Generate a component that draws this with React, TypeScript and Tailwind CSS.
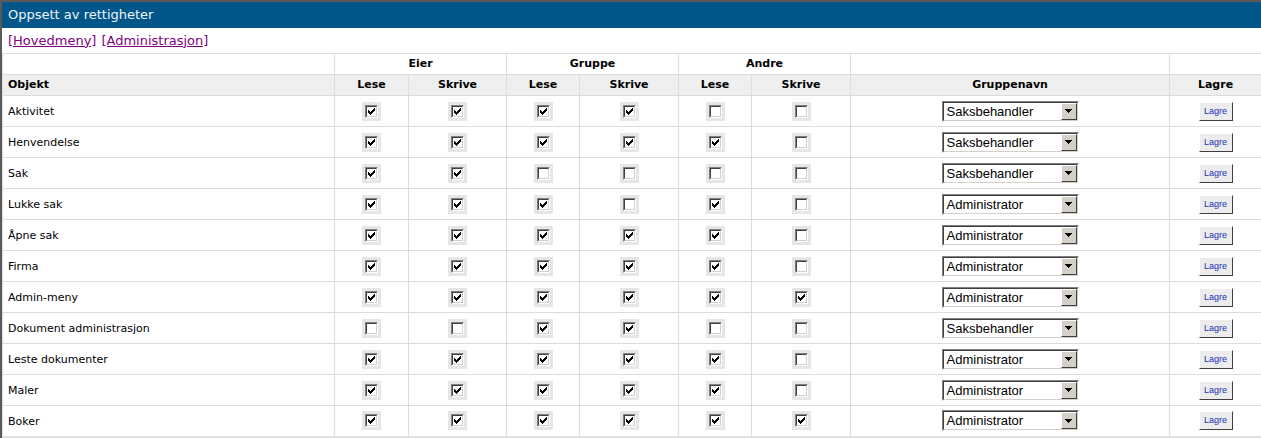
import React from 'react';

type Row = {
    name: string;
    perms: boolean[];
    group: string;
};

const rows: Row[] = [
    { name: 'Aktivitet', perms: [true, true, true, true, false, false], group: 'Saksbehandler' },
    { name: 'Henvendelse', perms: [true, true, true, true, true, false], group: 'Saksbehandler' },
    { name: 'Sak', perms: [true, true, false, false, false, false], group: 'Saksbehandler' },
    { name: 'Lukke sak', perms: [true, true, true, false, true, false], group: 'Administrator' },
    { name: 'Åpne sak', perms: [true, true, true, true, true, false], group: 'Administrator' },
    { name: 'Firma', perms: [true, true, true, true, true, false], group: 'Administrator' },
    { name: 'Admin-meny', perms: [true, true, true, true, true, true], group: 'Administrator' },
    { name: 'Dokument administrasjon', perms: [false, false, true, true, false, false], group: 'Saksbehandler' },
    { name: 'Leste dokumenter', perms: [true, true, true, true, true, false], group: 'Administrator' },
    { name: 'Maler', perms: [true, true, true, true, true, false], group: 'Administrator' },
    { name: 'Boker', perms: [true, true, true, true, true, true], group: 'Administrator' },
];

// classic 7x7 check mark
const checkPixels = [
    '......X',
    '.....XX',
    'X...XXX',
    'XX.XXX.',
    'XXXXX..',
    '.XXX...',
    '..X....',
];

function Checkbox({ checked }: { checked: boolean }) {
    return (
        <span className="inline-flex w-[19px] h-[19px] bg-[#e6e6e6] items-center justify-center align-middle">
            <span className="block w-[13px] h-[13px] border border-t-[#808080] border-l-[#808080] border-b-white border-r-white">
                <span className="flex w-[11px] h-[11px] items-center justify-center bg-white border border-t-[#404040] border-l-[#404040] border-b-[#d4d0c8] border-r-[#d4d0c8]">
                    {checked && (
                        <svg width="7" height="7" viewBox="0 0 7 7" shapeRendering="crispEdges">
                            {checkPixels.map((line, y) =>
                                line.split('').map((c, x) =>
                                    c === 'X' ? <rect key={`${x}-${y}`} x={x} y={y} width="1" height="1" fill="#000" /> : null
                                )
                            )}
                        </svg>
                    )}
                </span>
            </span>
        </span>
    );
}

function GroupSelect({ value }: { value: string }) {
    return (
        <span className="inline-flex w-[137px] h-[21px] align-middle border border-t-[#808080] border-l-[#808080] border-b-white border-r-white">
            <span className="flex flex-1 bg-white border border-t-[#404040] border-l-[#404040] border-b-[#d4d0c8] border-r-[#d4d0c8]">
                <span className="flex-1 pl-[3px] text-[13px] leading-[17px] text-black font-['Liberation_Sans',Arial,sans-serif] text-left">
                    {value}
                </span>
                <span className="flex w-[16px] h-[17px] items-center justify-center bg-[#d4d0c8] border border-t-white border-l-white border-b-[#404040] border-r-[#404040]">
                    <svg width="7" height="4" viewBox="0 0 7 4" shapeRendering="crispEdges">
                        <path d="M0 0h7v1h-1v1h-1v1h-1v1h-1v-1h-1v-1h-1v-1h-1z" fill="#000" />
                    </svg>
                </span>
            </span>
        </span>
    );
}

function SaveButton() {
    return (
        <span className="inline-flex w-[34px] h-[19px] items-center justify-center align-middle bg-[#ececec] border border-t-white border-l-white border-b-[#404040] border-r-[#404040] text-[9px] text-[#1a2fc0] font-['Liberation_Sans',Arial,sans-serif]">
            Lagre
        </span>
    );
}

export default function App() {
    const cell = 'border border-[#dcdcdc]';
    return (
        <div className="w-[1261px] h-[438px] overflow-hidden bg-white border-l-2 border-t-2 border-[#5a5a5a] font-['DejaVu_Sans',Verdana,sans-serif] text-black">
            <div className="h-[26px] bg-[#03568a] flex items-center pl-[6px] text-[13px] text-[#eef3f7]">
                Oppsett av rettigheter
            </div>
            <div className="h-[25px] flex items-center pl-[6px] text-[13px] gap-[5px]">
                <a href="#" className="text-[#800080] underline">[Hovedmeny]</a>
                <a href="#" className="text-[#800080] underline">[Administrasjon]</a>
            </div>
            <table className="table-fixed border-collapse w-[1259px] text-[11px] border-b-2 border-b-[#e0e0e0]">
                <colgroup>
                    <col className="w-[332px]" />
                    <col className="w-[74px]" />
                    <col className="w-[98px]" />
                    <col className="w-[73px]" />
                    <col className="w-[99px]" />
                    <col className="w-[73px]" />
                    <col className="w-[99px]" />
                    <col className="w-[319px]" />
                    <col className="w-[92px]" />
                </colgroup>
                <thead>
                    <tr className="h-[21px] font-bold">
                        <td className={cell}></td>
                        <td colSpan={2} className={`${cell} text-center`}>Eier</td>
                        <td colSpan={2} className={`${cell} text-center`}>Gruppe</td>
                        <td colSpan={2} className={`${cell} text-center`}>Andre</td>
                        <td className={cell}></td>
                        <td className={cell}></td>
                    </tr>
                    <tr className="h-[21px] font-bold bg-[#efefef]">
                        <td className={`${cell} pl-[5px]`}>Objekt</td>
                        <td className={`${cell} text-center`}>Lese</td>
                        <td className={`${cell} text-center`}>Skrive</td>
                        <td className={`${cell} text-center`}>Lese</td>
                        <td className={`${cell} text-center`}>Skrive</td>
                        <td className={`${cell} text-center`}>Lese</td>
                        <td className={`${cell} text-center`}>Skrive</td>
                        <td className={`${cell} text-center`}>Gruppenavn</td>
                        <td className={`${cell} text-center`}>Lagre</td>
                    </tr>
                </thead>
                <tbody>
                    {rows.map((row) => (
                        <tr key={row.name} className="h-[31px]">
                            <td className={`${cell} pl-[5px] pt-[3px]`}>{row.name}</td>
                            {row.perms.map((p, i) => (
                                <td key={i} className={`${cell} text-center leading-none`}>
                                    <Checkbox checked={p} />
                                </td>
                            ))}
                            <td className={`${cell} text-center leading-none`}>
                                <GroupSelect value={row.group} />
                            </td>
                            <td className={`${cell} text-center leading-none`}>
                                <SaveButton />
                            </td>
                        </tr>
                    ))}
                </tbody>
            </table>
        </div>
    );
}
